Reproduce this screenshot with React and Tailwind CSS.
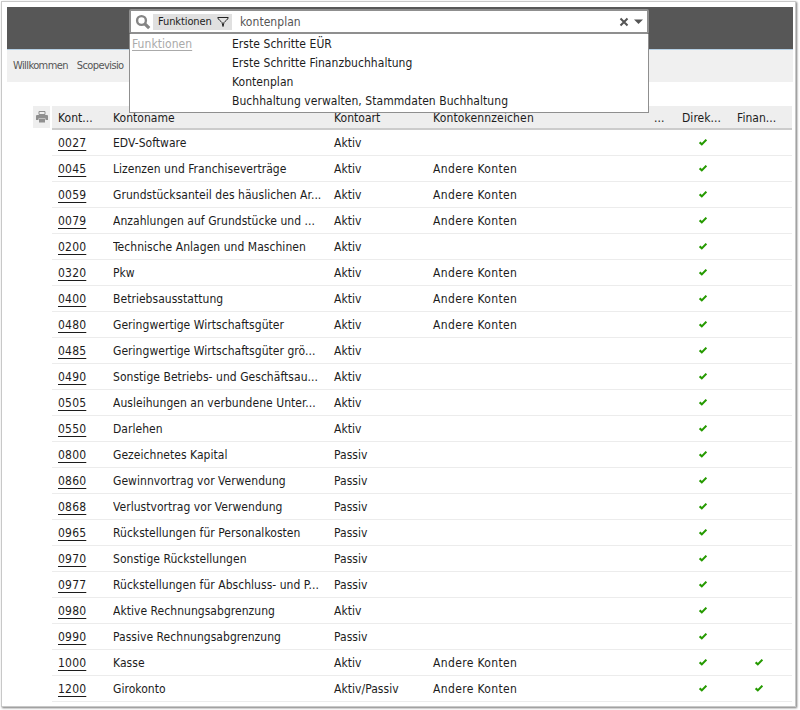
const rows = [
  ["0027","EDV-Software","Aktiv","",1,0],
  ["0045","Lizenzen und Franchiseverträge","Aktiv","Andere Konten",1,0],
  ["0059","Grundstücksanteil des häuslichen Ar...","Aktiv","Andere Konten",1,0],
  ["0079","Anzahlungen auf Grundstücke und ...","Aktiv","Andere Konten",1,0],
  ["0200","Technische Anlagen und Maschinen","Aktiv","",1,0],
  ["0320","Pkw","Aktiv","Andere Konten",1,0],
  ["0400","Betriebsausstattung","Aktiv","Andere Konten",1,0],
  ["0480","Geringwertige Wirtschaftsgüter","Aktiv","Andere Konten",1,0],
  ["0485","Geringwertige Wirtschaftsgüter grö...","Aktiv","",1,0],
  ["0490","Sonstige Betriebs- und Geschäftsau...","Aktiv","",1,0],
  ["0505","Ausleihungen an verbundene Unter...","Aktiv","",1,0],
  ["0550","Darlehen","Aktiv","",1,0],
  ["0800","Gezeichnetes Kapital","Passiv","",1,0],
  ["0860","Gewinnvortrag vor Verwendung","Passiv","",1,0],
  ["0868","Verlustvortrag vor Verwendung","Passiv","",1,0],
  ["0965","Rückstellungen für Personalkosten","Passiv","",1,0],
  ["0970","Sonstige Rückstellungen","Passiv","",1,0],
  ["0977","Rückstellungen für Abschluss- und P...","Passiv","",1,0],
  ["0980","Aktive Rechnungsabgrenzung","Aktiv","",1,0],
  ["0990","Passive Rechnungsabgrenzung","Passiv","",1,0],
  ["1000","Kasse","Aktiv","Andere Konten",1,1],
  ["1200","Girokonto","Aktiv/Passiv","Andere Konten",1,1],
];

const Check = () => (
  <svg width="8" height="7" viewBox="0 0 8 7" className="block">
    <path d="M0.6 3.4 L2.8 5.4 L7.4 0.7" fill="none" stroke="#259a00" strokeWidth="2.1" />
  </svg>
);

const Printer = () => (
  <svg width="12" height="12" viewBox="0 0 12 12" className="block">
    <path d="M3 0.5h6v3H3z" fill="none" stroke="#8f8f8f" />
    <path d="M1 4h10a1 1 0 0 1 1 1v4h-2.5V7.5h-7V9H0V5a1 1 0 0 1 1-1z" fill="#8f8f8f" />
    <path d="M3 8h6v3.5H3z" fill="#8f8f8f" />
  </svg>
);

export default function App() {
  return (
    <div className="relative w-[800px] h-[710px] bg-white overflow-hidden text-[12px] text-[#1c1c1c] tracking-[0.04px] font-['DejaVu_Sans_Condensed','Noto_Sans',sans-serif]">
      <div className="ml-[1px] mt-[1px] w-[795px] h-[706px] bg-white border border-[#c8c8c8] shadow-[1px_1px_2px_#777] pt-[5px] pl-[5px] pr-[3px]">
        <div className="h-[43px] w-[786px] bg-[#575757] border-b border-[#b5cfe4]" />
        <div className="h-[32px] w-[786px] bg-[#f0f0f0] flex items-center gap-[9px] pl-[6px] text-[#555] text-[11px] tracking-[-0.6px]">
          <span>Willkommen</span>
          <span>Scopevisio</span>
        </div>
        <div className="flex mt-[24px]">
          <div className="ml-[26px] w-[17px] h-[22px] bg-[#eeeeee] flex items-center justify-center"><Printer /></div>
          <div className="ml-[2px] w-[740px]">
            <div className="flex h-[24px] items-center bg-[#eeeeee] border-b-2 border-[#cccccc] pt-[2px]">
              <span className="w-[61px] pl-[6px]">Kont...</span>
              <span className="w-[221px]">Kontoname</span>
              <span className="w-[99px]">Kontoart</span>
              <span className="w-[221px] tracking-[0.15px]">Kontokennzeichen</span>
              <span className="w-[28px]">...</span>
              <span className="w-[55px]">Direk...</span>
              <span>Finan...</span>
            </div>
            {rows.map((r) => (
              <div key={r[0]} className="flex h-[26px] items-center border-b border-[#ececec]">
                <span className="w-[61px] pl-[6px]"><span className="underline underline-offset-[3px] tracking-[0.2px]">{r[0]}</span></span>
                <span className="w-[221px] whitespace-nowrap overflow-hidden">{r[1]}</span>
                <span className="w-[99px]">{r[2]}</span>
                <span className="w-[221px] tracking-[0.35px]">{r[3]}</span>
                <span className="w-[45px]" />
                <span className="w-[56px]">{r[4] ? <Check /> : null}</span>
                <span>{r[5] ? <Check /> : null}</span>
              </div>
            ))}
          </div>
        </div>
      </div>

      <div className="absolute left-[129px] top-[9px] w-[520px]">
        <div className="h-[25px] bg-white border-2 border-[#8f8f8f] rounded-[2px] flex items-center pl-[4px] pr-[3px]">
          <svg width="16" height="16" viewBox="0 0 16 16" className="shrink-0">
            <circle cx="6.5" cy="6.5" r="4.4" fill="none" stroke="#858585" strokeWidth="2.4" />
            <path d="M9.8 9.8 L14.2 14.2" stroke="#858585" strokeWidth="3.2" />
          </svg>
          <div className="ml-[2px] mt-[1px] h-[16px] w-[79px] bg-[#e0e0e0] flex items-center pl-[5px] gap-[5px] shrink-0 text-[11px] tracking-[-0.1px]">
            <span>Funktionen</span>
            <svg width="12" height="12" viewBox="0 0 12 12"><path d="M0.8 1.5h10.4c0 2-3.2 3.6-4.2 5L6 10.500 5 6.500C4 5.100.8 3.500.8 1.500z" fill="none" stroke="#222" strokeWidth="1" /></svg>
          </div>
          <span className="ml-[8px] text-[#555] flex-1">kontenplan</span>
          <svg width="10" height="10" viewBox="0 0 10 10" className="mr-[5px]"><path d="M1.5 1.5l7 7M8.500 1.500l-7 7" stroke="#555" strokeWidth="2" /></svg>
          <svg width="10" height="6" viewBox="0 0 10 6"><path d="M0 0.500h9L4.500 5z" fill="#555" /></svg>
        </div>
        <div className="h-[79px] bg-white border border-[#8f8f8f] border-t-0 flex pl-[2px] pt-[1px] tracking-[0.05px]">
          <span className="w-[100px] text-[#aaa] underline underline-offset-2 leading-[19px]">Funktionen</span>
          <div className="leading-[19px]">
            <div>Erste Schritte EÜR</div>
            <div>Erste Schritte Finanzbuchhaltung</div>
            <div>Kontenplan</div>
            <div>Buchhaltung verwalten, Stammdaten Buchhaltung</div>
          </div>
        </div>
      </div>
    </div>
  );
}
